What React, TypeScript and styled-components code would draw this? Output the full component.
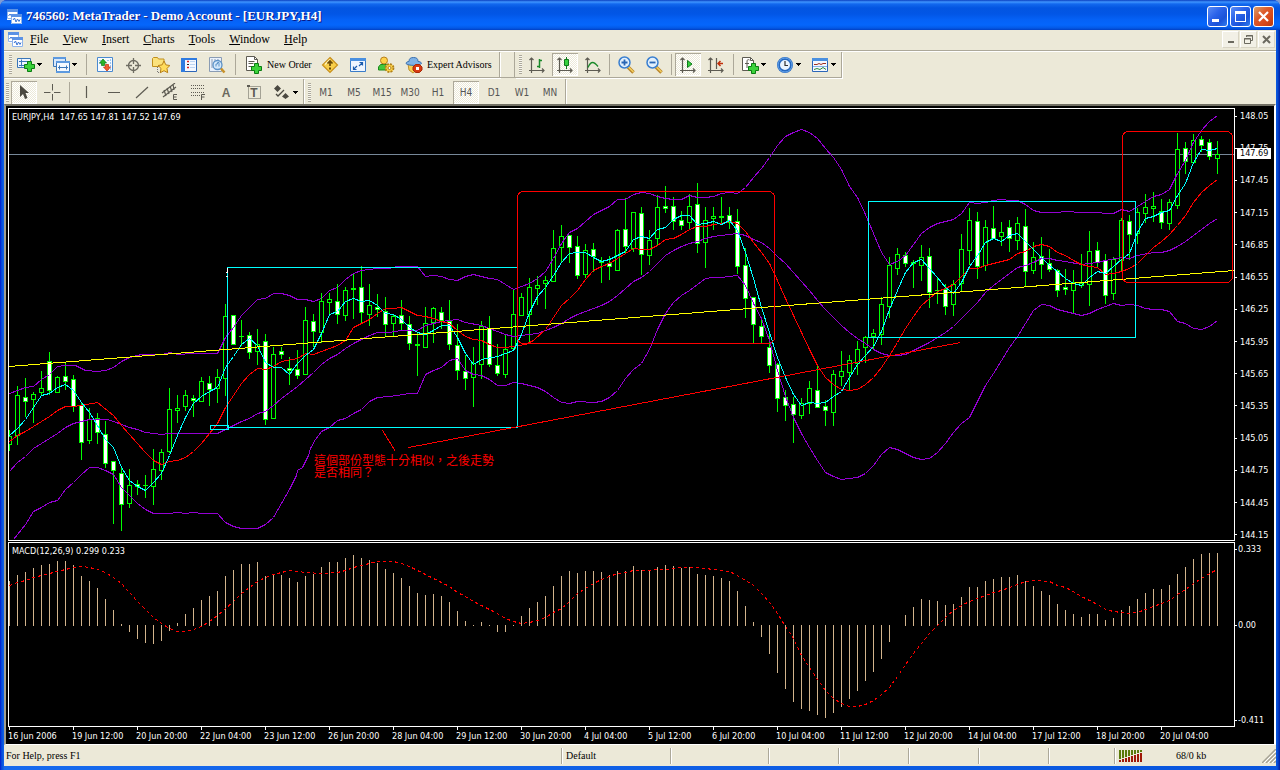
import React from "react";
import styled, { createGlobalStyle, css } from "styled-components";

const uiSerif = '"Liberation Serif", "Noto Sans CJK TC", serif';
const uiSans = '"DejaVu Sans Condensed", "DejaVu Sans", sans-serif';

const face = "#ece9d8";
const shade = "#aca899";

const GlobalStyle = createGlobalStyle`
  * { box-sizing: border-box; }
  body { margin: 0; background: #7f9cd4; font-family: ${uiSerif}; font-size: 12px; color: #000; }
  button { font: inherit; color: inherit; border: 0; background: none; padding: 0; margin: 0; }
  svg { display: block; flex: none; }
`;

/* ---------- frame ---------- */

const Frame = styled.div`
  display: flex;
  flex-direction: column;
  min-height: 100vh;
  border-radius: 7px 7px 0 0;
  overflow: hidden;
  background: #0831d9;
`;

const TitleBar = styled.header`
  display: flex;
  align-items: center;
  height: 30px;
  padding: 2px 6px 0 7px;
  background: linear-gradient(#0a3fc0 0, #3f95ff 2px, #1268ee 4px, #0355e1 8px, #0256e6 14px, #0562f7 20px, #0566fc 25px, #0459e6 28px, #0140c4 30px);
`;

const Title = styled.h1`
  flex: 1;
  margin: 0;
  padding-left: 4px;
  font-size: 13px;
  line-height: 16px;
  font-weight: bold;
  color: #fff;
  text-shadow: 1px 1px #0a1883;
`;

const CaptionButtons = styled.div`
  display: flex;
  gap: 2px;
`;

const CaptionButton = styled.button<{ $close?: boolean }>`
  display: flex;
  align-items: center;
  justify-content: center;
  width: 21px;
  height: 21px;
  border: 1px solid #fff;
  border-radius: 3px;
  background: ${(p) =>
    p.$close
      ? "linear-gradient(135deg, #d9a06a 0, #dd5a2a 40%, #d8481a 70%, #b93a10 100%)"
      : "linear-gradient(135deg, #5c8df5 0, #2b63ea 40%, #1a52d8 70%, #2f7cf0 100%)"};
`;

const Body = styled.div`
  display: flex;
  flex-direction: column;
  flex: 1;
  padding: 0 4px 4px;
  background: linear-gradient(90deg, #0019cf 0, #0855dd 2px, #0855dd 3px, #166aee 4px, #0855dd calc(100% - 3px), #001ea0 100%);
`;

const MenuBar = styled.nav`
  display: flex;
  align-items: center;
  height: 22px;
  padding: 0 1px 3px 4px;
  background: ${face};
  border-bottom: 1px solid #fff;
  box-shadow: inset 0 -1px ${shade};
`;

const MenuItems = styled.div`
  display: flex;
  flex: 1;
`;

const MenuItem = styled.button`
  padding: 0 7px;
  font-size: 12px;
  line-height: 18px;
`;

const ChildButtons = styled.div`
  display: flex;
  gap: 1px;
`;

const ChildButton = styled.button`
  display: flex;
  align-items: center;
  justify-content: center;
  width: 17px;
  height: 17px;
  background: #f2f0e6;
  border: 1px solid #fff;
  border-right-color: #d8d4c4;
  border-bottom-color: #d8d4c4;
`;

/* ---------- toolbars ---------- */

const ToolRow = styled.div<{ $height: number }>`
  display: flex;
  height: ${(p) => p.$height}px;
  background: ${face};
`;

const ToolBar = styled.div<{ $pad?: number; $last?: boolean }>`
  display: flex;
  align-items: center;
  padding-top: ${(p) => (p.$last ? 1 : 0)}px;
  padding-right: ${(p) => p.$pad ?? 0}px;
  border-right: 1px solid ${shade};
  border-bottom: ${(p) => (p.$last ? "0" : "1px solid " + shade)};
  box-shadow: 1px 1px #fff;
  margin-bottom: ${(p) => (p.$last ? 0 : 1)}px;
`;

const BarGap = styled.div`
  width: 15px;
  border-right: 1px solid ${shade};
  border-bottom: 1px solid ${shade};
  margin-bottom: 1px;
`;

const Grip = styled.div<{ $before?: number; $after?: number }>`
  width: 3px;
  height: 19px;
  margin: 0 ${(p) => p.$after ?? 1}px 0 ${(p) => p.$before ?? 4}px;
  background: repeating-linear-gradient(${shade} 0 1px, #f8f7f0 1px 2px);
`;

const Divider = styled.div<{ $width?: number }>`
  display: flex;
  justify-content: center;
  width: ${(p) => p.$width ?? 6}px;
  height: 21px;
  &::before {
    content: "";
    width: 1px;
    background: ${shade};
  }
`;

const pressedLook = css`
  background: repeating-conic-gradient(#fff 0 25%, #ece9d8 0 50%) 0 0 / 2px 2px;
  box-shadow: inset 1px 1px ${shade}, inset -1px -1px #fff;
`;

const ToolButton = styled.button<{ $pressed?: boolean }>`
  display: flex;
  align-items: center;
  justify-content: center;
  width: 26px;
  height: 23px;
  margin: 0 1px;
  ${(p) => p.$pressed && pressedLook}
`;

const DropButton = styled.button`
  display: flex;
  align-items: center;
  width: 35px;
  height: 23px;
  padding-left: 5px;
  gap: 2px;
`;

const TextButton = styled.button<{ $width: number }>`
  display: flex;
  align-items: center;
  width: ${(p) => p.$width}px;
  height: 23px;
  padding-left: 5px;
  gap: 4px;
  font-size: 10px;
  white-space: nowrap;
`;

const PeriodButton = styled(ToolButton)`
  font-family: ${uiSans};
  font-size: 10px;
  color: #555;
`;

/* ---------- chart ---------- */

const ChartWindow = styled.main`
  display: flex;
  flex-direction: column;
  flex: 1;
  gap: 1px;
  padding: 2px 0 0 2px;
  background: #000;
  border: solid;
  border-width: 2px 2px 1px 2px;
  border-color: #716f64 #fff #fff #a09d8e;
  color: #fff;
  font-family: ${uiSans};
  font-size: 9px;
  line-height: 12px;
`;

const PaneRow = styled.section`
  display: flex;
`;

const Pane = styled.div`
  position: relative;
  display: flex;
  justify-content: flex-end;
  flex: 1;
  min-width: 0;
  overflow: hidden;
  border: 1px solid #fff;
`;

const PaneTitle = styled.h2`
  position: absolute;
  top: 2px;
  left: 3px;
  margin: 0;
  font-size: 9px;
  font-weight: normal;
  line-height: 12px;
  white-space: pre;
`;

const PriceAxis = styled.div`
  position: relative;
  display: flex;
  flex-direction: column;
  justify-content: space-between;
  width: 39px;
  padding-top: 2px;
`;

const MacdAxis = styled.div`
  display: grid;
  grid-template-rows: 76px 95px 12px;
  align-items: start;
  width: 39px;
  padding-top: 1px;
`;

const AxisLabel = styled.div<{ $gap?: number }>`
  display: flex;
  align-items: center;
  gap: ${(p) => p.$gap ?? 3}px;
  height: 12px;
  &::before {
    content: "";
    width: 2px;
    height: 1px;
    background: #fff;
  }
`;

const PriceTag = styled.output`
  position: absolute;
  top: 40px;
  left: 2px;
  width: 34px;
  height: 11px;
  padding-left: 3px;
  background: #fff;
  color: #000;
  line-height: 11px;
`;

const TimeAxis = styled.ol`
  display: flex;
  justify-content: flex-end;
  overflow: hidden;
  height: 17px;
  margin: -1px 50px 0 0;
  padding: 0;
  list-style: none;
`;

const TimeLabel = styled.li`
  flex: none;
  width: 64px;
  white-space: nowrap;
  &::before {
    content: "";
    display: block;
    width: 1px;
    height: 3px;
    margin-left: 1px;
    background: #fff;
  }
`;

/* ---------- status bar ---------- */

const StatusBar = styled.footer`
  display: flex;
  align-items: center;
  height: 21px;
  background: ${face};
  font-size: 10px;
`;

const StatusCell = styled.div<{ $width?: number }>`
  display: flex;
  align-items: center;
  flex: ${(p) => (p.$width ? "none" : "1")};
  width: ${(p) => (p.$width ? p.$width + "px" : "auto")};
  height: 16px;
  padding-left: ${(p) => (p.$width ? 4 : 2)}px;
  border-left: ${(p) => (p.$width ? "1px solid " + shade : "0")};
  box-shadow: ${(p) => (p.$width ? "inset 1px 0 #fff" : "none")};
`;

const Traffic = styled.span`
  flex: 1;
  padding-left: 33px;
`;

/* ---------- icons ---------- */

const Icon = ({ children, size = 18 }: { children: React.ReactNode; size?: number }) => (
  <svg width={size} height={size} viewBox={`0 0 ${size} ${size}`} fill="none" aria-hidden="true">
    {children}
  </svg>
);

const Arrow = () => (
  <svg width="5" height="3" viewBox="0 0 5 3" aria-hidden="true" shapeRendering="crispEdges">
    <path d="M0 0h5v1H0zM1 1h3v1H1zM2 2h1v1H2z" fill="#000" />
  </svg>
);

const AppIcon = () => (
  <Icon size={15}>
    <path d="M0 0h11v5h4v10H4v-4H0z" fill="#f4f8ff" />
    <path d="M.5.5h10v9H.5z" fill="#fff" stroke="#8fb4ea" />
    <path d="M0 0h11v3H0z" fill="#5b92e5" />
    <path d="M1.500 7l1.500-2 1.500 2" stroke="#3974d4" />
    <path d="M4.500 5.500h10v9h-10z" fill="#fff" stroke="#8fb4ea" />
    <path d="M4 5h11v3H4z" fill="#5b92e5" />
    <path d="M6 11l1.500-2 1.500 4 1.500-3 1.500 2.500 1-2" stroke="#3974d4" />
  </Icon>
);

const PlusMark = ({ x, y }: { x: number; y: number }) => (
  <path
    transform={`translate(${x} ${y})`}
    d="M3.500.5h4v3h3v4h-3v3h-4v-3h-3v-4h3z"
    fill="#3bd23b"
    stroke="#0a7d12"
  />
);

const NewChartIcon = () => (
  <Icon>
    <path d="M.5 2.500h13v9H.5z" fill="#eef5ff" stroke="#3a76b8" />
    <path d="M2 5.500h9M2 9.500h5M4.500 3.500v7" stroke="#3a76b8" />
    <PlusMark x={7} y={5} />
  </Icon>
);

const ProfilesIcon = () => (
  <Icon>
    <path d="M1.500 1.500h12v9h-12z" fill="#d9e8fa" stroke="#3a76b8" />
    <path d="M1 1h13v2H1z" fill="#5d9ae0" />
    <path d="M4.500 5.500h13v11h-13z" fill="#f4f9ff" stroke="#3a76b8" />
    <path d="M4 5h14v2H4zM4 15h14v2H4z" fill="#5d9ae0" />
    <path d="M6 11.500h10M7.500 9.500v4M14.500 9.500v4" stroke="#3a76b8" />
  </Icon>
);

const MarketIcon = () => (
  <Icon>
    <path d="M1.500 1.500h15v14h-15z" fill="#f6faff" stroke="#4a8ad0" />
    <path d="M14.500 3v11M3 4.500h3M3 7.500h2M11 4.500h2M11 13.500h2" stroke="#9cc4ee" strokeDasharray="2 1" />
    <path d="M7 3l3.500 4H8.500v2.500h-3V7h-2z" fill="#28b428" stroke="#0c7a14" strokeWidth=".7" />
    <path d="M11 15l-3.500-4h2V8.500h3V11h2z" fill="#f06030" stroke="#c02a0a" strokeWidth=".7" />
  </Icon>
);

const CrosshairIcon = () => (
  <Icon>
    <circle cx="9.500" cy="9.500" r="5" stroke="#6e6c62" strokeWidth="1.300" />
    <path d="M9.500 2v6M9.500 11v6M2 9.500h6M11 9.500h6" stroke="#6e6c62" strokeWidth="1.300" />
  </Icon>
);

const NavigatorIcon = () => (
  <Icon>
    <path d="M.5 10.500v-8l1-1h4l1 1.500h5.500v7.500z" fill="#fbe27c" stroke="#c08f1c" />
    <path d="M5.500 11v6M6 16.500h3" stroke="#777" strokeDasharray="1 1" />
    <path
      d="M12 5l1.900 3.900 4 .6-2.900 2.900.7 4.300-3.700-2-3.700 2 .7-4.300-2.900-2.900 4-.6z"
      fill="#ffdc5c"
      stroke="#b8801a"
    />
  </Icon>
);

const DataWindowIcon = () => (
  <Icon>
    <path d="M1.500 2.500h15v13h-15z" fill="#f4f8ff" stroke="#2c66b8" />
    <path d="M1 2h4v14H1zM1 2h16v2H1z" fill="#2f7be0" />
    <path d="M7 5.500h2M7 11.500h2" stroke="#e02020" strokeWidth="1.500" />
    <path d="M7 8.500h2" stroke="#222" />
    <path d="M10 5.500h5M10 8.500h5M10 11.500h5" stroke="#bcd4f2" />
  </Icon>
);

const TesterIcon = () => (
  <Icon>
    <path d="M1.500 1.500h12v14h-12z" fill="#eaf2fc" stroke="#8a9cb4" />
    <path d="M4 3v9M7 3v3M10 3v3" stroke="#8a9cb4" />
    <circle cx="9.500" cy="9" r="4.500" fill="#d4e8fa" stroke="#5b92c8" strokeWidth="1.300" />
    <path d="M8 10.500V8h1.500V6.500h1.500v4" stroke="#5b92c8" />
    <path d="M13 12.500l3.500 4" stroke="#c8922c" strokeWidth="2.500" />
  </Icon>
);

const NewOrderIcon = () => (
  <Icon>
    <path d="M1.500.5h8l3 3v11h-11z" fill="#fff" stroke="#5d5b52" />
    <path d="M9.500.5v3h3M3.500 5.500h6M3.500 7.500h5M3.500 10.500h4" stroke="#5d5b52" />
    <PlusMark x={6} y={7} />
  </Icon>
);

const DiamondIcon = () => (
  <Icon>
    <path d="M9 1.500L16.500 9 9 16.500 1.500 9z" fill="#f8cf4a" stroke="#c8901c" strokeWidth="1.200" />
    <path d="M9 3.500L4 8.500" stroke="#fff3b8" strokeWidth="1.500" />
    <path d="M9 5v5M6.500 7.500L9 5l2.500 2.500" stroke="#6a4a08" strokeWidth="1.700" />
    <path d="M9 11.500v2" stroke="#6a4a08" strokeWidth="2" />
  </Icon>
);

const FullScreenIcon = () => (
  <Icon>
    <path d="M1.500 2.500h15v13h-15z" fill="#eef5ff" stroke="#3a7cc8" />
    <path d="M1 2h16v3H1z" fill="#4a90e0" />
    <path d="M10 10l3.500-3.500M10.500 6.500h3v3M8 10l-3.500 3.500M7.500 13.500h-3v-3" stroke="#1c5cae" strokeWidth="1.200" />
  </Icon>
);

const OptionsIcon = () => (
  <Icon>
    <path d="M1.500 14v-3l2-2.500h6l2 2.500v3z" fill="#46c83c" stroke="#1c8a1c" />
    <circle cx="7" cy="4.500" r="3.500" fill="#ffd24a" stroke="#b8801a" />
    <circle cx="12.500" cy="12" r="4" fill="#ffd54a" stroke="#b0801a" strokeWidth="1.800" strokeDasharray="2 1.140" />
    <circle cx="12.500" cy="12" r="1.500" fill="#fff" stroke="#b0801a" />
  </Icon>
);

const ExpertIcon = () => (
  <Icon>
    <path d="M3 8h10l-1 6-4 3-4-3z" fill="#f5cf55" stroke="#c0902c" />
    <path d="M1 7.500c0-1.500 2-2 3-2 0-3 1.500-4 4.500-4s4.500 1 4.500 4c1 0 3.500.5 3.500 2-2 2.500-13.500 2.500-15.500 0z" fill="#7fb2e6" stroke="#3a6fae" />
    <path d="M10.500 8.500h4l2.500 2.500v3l-2.500 2.500h-4L8 14v-3z" fill="#d83a12" stroke="#a82808" />
    <path d="M11 11h3v3h-3z" fill="#fff" />
  </Icon>
);

const ChartAxes = () => (
  <path d="M3.500 2v15M1 14.500h15M1.500 4l2-2 2 2M14 12.500l2 2-2 2" stroke="#5d5b52" strokeWidth="1.200" />
);

const BarChartIcon = () => (
  <Icon>
    <ChartAxes />
    <path d="M11.500 3v9M9 10.500h2.500M11.500 4.500H14" stroke="#1a8a2a" strokeWidth="1.500" />
  </Icon>
);

const CandleIcon = () => (
  <Icon>
    <ChartAxes />
    <path d="M10.500 1v12" stroke="#0e7a1a" />
    <path d="M8.500 3.500h4v6h-4z" fill="#35d03c" stroke="#0e7a1a" />
  </Icon>
);

const LineChartIcon = () => (
  <Icon>
    <ChartAxes />
    <path d="M4 11.500c3-7 6-6 10-1" stroke="#1a8a2a" strokeWidth="1.300" />
  </Icon>
);

const ZoomIcon = ({ plus }: { plus?: boolean }) => (
  <Icon>
    <path d="M11 11l5.500 5.500" stroke="#b8842a" strokeWidth="3.500" />
    <path d="M11.500 11l5 5" stroke="#f5d060" strokeWidth="1.500" />
    <circle cx="7.500" cy="6.500" r="5.500" fill="#e2f0fd" stroke="#3a7fd0" strokeWidth="1.500" />
    <path d={plus ? "M4.500 6.500h6M7.500 3.500v6" : "M4.500 6.500h6"} stroke="#2a66b4" strokeWidth="1.800" />
  </Icon>
);

const AutoScrollIcon = () => (
  <Icon>
    <ChartAxes />
    <path d="M8.500 4.500l4.500 3.500-4.500 3.500z" fill="#35d03c" stroke="#0e7a1a" />
  </Icon>
);

const ShiftIcon = () => (
  <Icon>
    <ChartAxes />
    <path d="M9.500 2v11" stroke="#5d5b52" strokeWidth="1.200" />
    <path d="M11 7.500h5M13.500 5L11 7.500l2.500 2.500" stroke="#c0300c" strokeWidth="1.500" />
  </Icon>
);

const IndicatorsIcon = () => (
  <Icon>
    <path d="M1.500 1.500h8l3 3v10h-11z" fill="#fff" stroke="#5d5b52" />
    <path d="M9.500 1.500v3h3M8.500 4c-2-1-2.500 0-2.500 2v6M4 7.500h4" stroke="#5d5b52" />
    <PlusMark x={7} y={7} />
  </Icon>
);

const ClockIcon = () => (
  <Icon>
    <circle cx="9" cy="9" r="6.500" fill="#eaf4ff" stroke="#2568c0" strokeWidth="3" />
    <circle cx="9" cy="9" r="7" stroke="#6aa8ee" strokeWidth="1" />
    <path d="M9 5v4.500h3" stroke="#333" strokeWidth="1.200" />
  </Icon>
);

const TemplateIcon = () => (
  <Icon>
    <path d="M1.500 2.500h15v13h-15z" fill="#f4f8ff" stroke="#2c66b8" />
    <path d="M1 2h16v3H1z" fill="#4a90e0" />
    <path d="M3 8.500h3l2-1 2 1 2-1h3" stroke="#a03020" />
    <path d="M2 10.500h14" stroke="#8ab4e6" />
    <path d="M3 13.500l3-1 3 1 3-2 3 2" stroke="#2a8a3a" />
  </Icon>
);

const CursorIcon = () => (
  <Icon>
    <path d="M5 2v12l3-3 2 5 2.500-1-2-5H14z" fill="#4a4840" />
  </Icon>
);

const CrossIcon = () => (
  <Icon>
    <path d="M9.500 1v6.500M9.500 11v6.500M1 9.500h6.500M11 9.500h6.500" stroke="#5d5b52" />
  </Icon>
);

const LineIcon = ({ d }: { d: string }) => (
  <Icon>
    <path d={d} stroke="#5d5b52" strokeWidth="1.200" />
  </Icon>
);

const ChannelIcon = () => (
  <Icon>
    <path d="M1 10L14 0M2 14L15 4M3 7l2 6M6 5l2 6M9 3l2 6M12 1l1 6" stroke="#5d5b52" strokeWidth="1.200" />
    <path d="M16 11.500h-3.500v5H16M12.500 14h3" stroke="#5d5b52" />
  </Icon>
);

const FiboIcon = () => (
  <Icon>
    <path d="M2 2.500h14M2 5.500h14M2 9.500h14M2 12.500h9" stroke="#5d5b52" strokeDasharray="1 1" />
    <path d="M12.500 17v-5.500H16M12.500 14h3" stroke="#5d5b52" />
  </Icon>
);

const LetterIcon = () => (
  <Icon>
    <text x="9" y="14" textAnchor="middle" fontFamily="Liberation Sans, sans-serif" fontSize="12" fontWeight="bold" fill="#6b695f">
      A
    </text>
  </Icon>
);

const LabelIcon = () => (
  <Icon>
    <path d="M3.500 3.500h12v12h-12z" stroke="#5d5b52" strokeDasharray="1 1" />
    <path d="M2 2h3v2H2z" fill="#5d5b52" />
    <text x="9" y="14" textAnchor="middle" fontFamily="Liberation Sans, sans-serif" fontSize="12" fontWeight="bold" fill="#5d5b52">
      T
    </text>
  </Icon>
);

const MarksIcon = () => (
  <Icon>
    <path d="M4.500 2L8 5.500 4.500 9 1 5.500zM12.500 10l3.500 3.500-3.500 2.500-3.500-2.500z" fill="#4a4840" />
    <path d="M3 11l2 2 6-6" stroke="#4a4840" strokeWidth="1.300" />
  </Icon>
);

/* ---------- chart data ---------- */

const FIRST_X = 9;
const STEP = 8;

// Each candle: high, body top, body bottom, low, falling (1) or rising (0).
const candles: number[][] = [
  [430,436,444,450,0],[386,395,435,444,0],[378,397,401,416,1],[392,394,399,422,0],[371,388,392,394,0],
  [352,361,390,394,1],[376,377,392,392,0],[363,376,381,389,1],[375,379,406,411,1],[403,405,442,459,1],
  [408,419,440,443,0],[413,418,432,443,1],[421,434,463,467,1],[461,461,470,523,1],[468,473,504,530,1],
  [469,485,503,507,0],[480,484,486,494,1],[475,485,485,497,0],[449,469,486,504,0],[449,452,470,479,0],
  [388,409,451,452,0],[395,408,410,422,0],[390,395,406,410,0],[395,398,400,416,1],[377,381,401,401,0],
  [376,383,389,405,1],[369,377,388,402,0],[304,316,378,395,0],[315,315,344,344,1],[320,336,336,345,0],
  [332,335,352,358,1],[329,344,351,364,0],[334,341,419,424,1],[347,354,418,418,0],[347,351,354,358,1],
  [357,368,370,384,1],[350,369,375,378,1],[307,320,374,374,0],[314,321,331,346,1],[293,301,332,342,0],
  [293,299,302,315,0],[284,301,314,323,1],[287,290,315,320,0],[274,288,289,318,0],[266,287,312,322,1],
  [284,305,314,325,0],[294,307,309,316,1],[297,311,324,336,1],[314,316,323,336,0],[300,315,323,329,1],
  [316,324,343,349,1],[332,344,345,375,0],[307,323,347,347,0],[307,308,322,342,0],[307,312,320,328,1],
  [300,321,344,349,1],[324,345,370,379,1],[355,371,378,389,1],[347,363,377,406,0],[321,326,364,378,0],
  [316,328,364,366,1],[344,365,373,375,1],[334,349,374,377,0],[290,314,348,350,0],[293,297,315,315,0],
  [278,287,314,342,0],[276,285,288,304,0],[276,280,283,308,0],[230,248,281,281,0],[225,236,247,261,0],
  [235,235,247,262,1],[236,246,275,278,1],[244,250,274,277,0],[243,249,256,271,1],[257,261,262,282,0],
  [256,263,266,279,1],[229,230,270,270,0],[198,229,246,252,1],[212,212,248,251,0],[207,213,254,274,1],
  [230,240,255,264,0],[195,207,238,244,0],[186,206,208,212,1],[197,206,221,229,1],[211,220,225,229,1],
  [194,206,222,228,0],[183,204,243,252,1],[207,220,242,267,0],[207,216,218,229,0],[197,216,217,222,0],
  [207,215,222,228,1],[209,221,266,273,1],[248,265,298,317,1],[297,297,324,342,1],[317,326,336,342,1],
  [332,347,365,372,1],[363,364,398,411,1],[390,397,405,420,1],[397,404,414,442,1],[398,403,415,418,0],
  [381,388,403,413,0],[365,390,407,407,1],[400,406,410,425,1],[370,374,412,425,0],[351,371,376,385,0],
  [355,360,372,389,0],[341,349,363,374,0],[336,337,347,362,0],[329,333,336,349,0],[297,304,334,344,0],
  [257,265,306,317,0],[248,254,268,274,0],[252,255,263,266,1],[260,262,263,287,0],[245,257,265,280,0],
  [248,256,292,307,1],[277,290,290,303,0],[284,289,306,314,1],[280,284,304,315,0],[234,249,283,291,0],
  [208,220,250,264,0],[212,221,266,278,1],[220,227,265,270,0],[206,228,238,238,1],[222,232,236,245,0],
  [220,227,238,251,1],[217,223,240,249,0],[209,226,271,286,1],[242,257,270,273,0],[237,256,264,278,1],
  [249,263,269,271,1],[269,270,290,296,1],[269,287,289,294,1],[270,282,290,312,0],[254,283,285,287,0],
  [231,251,284,305,0],[242,250,262,267,1],[254,260,295,303,1],[257,259,293,299,0],[218,220,260,270,0],
  [215,221,234,259,1],[208,212,233,243,0],[194,207,213,222,0],[192,206,208,221,0],[199,211,222,228,1],
  [199,202,223,229,0],[133,149,205,208,0],[142,148,161,173,1],[134,140,162,162,0],[136,139,145,151,1],
  [139,142,156,159,1],[141,154,158,173,0],
];

const bandUpper =
  "9,393 17,390 25,387 33,386 41,379 49,374 57,366 65,365 75,365 85,370 97,371 105,370 113,367 121,361 129,357 141,354 161,354 170,352 177,354 193,353 217,353 225,337 233,327 241,315 249,307 257,299 265,298 273,293 281,293 289,295 297,299 305,299 313,301 321,298 329,290 337,287 345,279 353,273 361,270 369,269 377,268 388,268 397,266 417,266 425,276 433,275 441,276 449,279 457,280 465,276 473,274 481,276 489,278 497,279 505,284 513,289 529,283 537,278 545,271 553,258 561,243 569,232 577,228 585,221 593,214 601,210 609,206 617,199 625,199 633,194 641,192 649,193 657,196 665,198 673,199 681,199 689,195 697,197 705,197 713,196 721,193 729,192 737,193 745,187 753,177 761,168 769,157 777,145 785,136 793,132 801,129 809,132 817,138 825,148 833,157 841,169 849,186 857,197 865,214 873,233 881,252 889,264 897,261 905,255 913,244 921,233 929,227 937,223 945,221 953,219 961,213 969,202 977,203 985,202 993,200 1001,199 1009,200 1017,200 1025,204 1033,210 1041,212 1057,212 1065,211 1081,212 1089,212 1113,213 1121,209 1129,211 1137,206 1145,201 1153,196 1161,194 1169,189 1177,173 1185,160 1193,142 1201,130 1209,121 1217,115";

const bandMiddle =
  "9,471 17,462 25,456 33,448 41,443 49,438 57,433 65,427 73,423 81,421 89,419 107,419 113,421 121,424 129,427 137,429 145,432 161,434 169,433 217,433 225,429 233,425 241,421 249,418 257,413 265,411 273,405 281,398 289,392 297,386 305,379 313,372 321,364 329,358 337,354 345,348 353,343 361,339 369,335 377,332 388,332 401,330 417,330 425,325 441,321 457,319 465,322 481,325 489,328 497,331 505,334 513,336 521,335 537,333 545,330 553,327 561,323 569,318 577,314 585,311 593,308 601,305 609,301 617,295 625,288 633,281 641,277 649,271 657,263 665,255 673,250 681,246 689,243 697,241 705,238 713,236 721,235 737,233 745,235 753,239 761,242 769,248 777,256 785,263 793,272 801,281 809,290 817,300 825,309 833,317 841,325 849,332 857,338 865,343 873,349 881,353 889,355 897,355 905,354 913,350 921,346 929,342 937,337 945,332 953,326 961,318 969,310 977,302 985,292 993,285 1001,279 1009,273 1017,267 1025,265 1033,262 1041,258 1049,258 1057,260 1065,261 1081,264 1097,262 1105,260 1121,257 1129,258 1137,255 1153,252 1161,252 1169,250 1177,246 1185,241 1193,235 1201,229 1209,223 1217,218";

const bandLower =
  "13,539 17,534 25,524 33,511 41,507 49,502 57,500 65,489 73,482 81,474 89,467 97,467 105,470 113,474 121,487 129,495 137,503 145,509 153,513 169,513 177,512 185,513 193,512 201,513 217,513 225,522 233,526 241,528 257,528 265,524 273,517 281,503 289,489 296,475 297,470 302,467 308,455 310,448 315,439 321,431 329,427 337,420 345,418 353,413 361,409 369,401 377,397 388,396 397,395 409,393 417,393 425,374 433,370 441,367 449,360 457,358 465,370 473,374 481,375 489,379 497,385 505,385 513,382 521,383 529,385 537,387 545,391 553,397 561,402 569,403 577,401 593,402 601,401 609,397 617,390 625,378 633,369 641,363 649,349 657,329 665,313 673,302 681,295 689,290 697,284 705,278 713,277 721,277 729,276 737,275 745,285 753,303 761,318 769,340 777,370 785,396 793,417 801,433 809,447 817,460 825,472 833,476 841,479 857,477 865,473 873,465 881,454 889,447 897,449 905,453 913,457 921,459 929,458 937,452 945,443 953,432 961,423 969,417 977,401 985,385 993,373 1001,360 1009,347 1017,336 1025,323 1033,310 1041,304 1049,305 1057,309 1065,311 1081,315 1089,313 1097,309 1105,306 1113,303 1121,305 1129,304 1137,305 1145,308 1153,309 1161,309 1169,311 1177,321 1185,323 1193,328 1201,329 1209,326 1217,320";

const fastAverage =
  "9,435 17,428 25,419 33,407 41,395 49,393 57,387 65,384 73,390 81,402 89,412 97,425 105,439 113,447 121,467 129,480 137,486 145,490 153,482 161,473 169,455 177,435 185,417 193,403 201,396 209,391 217,387 225,367 233,356 241,344 249,338 257,345 265,362 273,367 281,367 289,374 297,363 305,355 313,349 321,333 329,314 337,311 345,301 353,298 361,301 369,300 377,305 385,313 393,314 401,319 409,327 417,332 425,334 433,330 441,325 449,325 457,337 465,353 473,364 481,359 497,356 513,350 521,334 529,312 537,296 545,287 553,275 561,262 569,253 577,252 585,252 593,257 601,261 609,259 617,255 625,251 633,239 641,236 649,238 657,229 665,227 673,219 681,215 689,215 697,224 705,223 713,221 721,224 729,220 737,230 745,252 753,278 761,307 769,332 777,357 785,377 793,394 801,405 809,402 817,403 825,402 833,396 841,391 849,377 857,364 865,355 873,346 881,331 889,309 897,290 905,272 913,262 921,259 929,268 937,277 945,287 953,293 961,282 969,266 977,255 985,242 993,238 1001,241 1009,235 1017,233 1025,241 1033,249 1041,257 1049,265 1057,271 1065,278 1073,283 1081,285 1089,277 1097,271 1105,273 1113,266 1121,259 1129,253 1137,232 1145,218 1153,216 1161,212 1169,210 1177,195 1185,183 1193,162 1201,149 1209,150 1217,148";

const slowAverage =
  "9,441 17,435 25,431 33,426 41,421 49,416 57,410 65,406 73,406 81,405 97,402 113,415 121,425 129,434 137,443 145,452 153,460 161,464 169,461 177,460 185,457 193,451 201,443 209,433 217,423 225,407 233,395 241,383 249,374 257,368 265,369 273,366 281,361 297,358 305,353 313,354 337,345 345,340 353,327 361,323 369,319 377,313 385,308 393,308 401,307 409,311 417,315 425,316 433,318 441,321 449,323 457,330 465,336 473,339 481,340 489,344 497,347 505,347 513,346 525,344 533,340 545,329 553,317 561,305 569,298 577,290 585,279 593,270 601,266 609,263 617,258 625,253 633,248 641,249 649,249 657,245 665,239 673,238 681,234 689,229 697,226 705,226 713,224 721,223 729,221 737,223 745,231 753,242 761,252 769,263 777,280 785,298 793,315 801,332 809,349 817,365 825,377 833,384 841,389 849,390 857,389 865,384 873,377 881,367 889,355 897,342 905,328 913,316 921,305 929,298 937,291 945,288 953,284 961,276 969,268 977,268 985,265 1001,261 1009,259 1017,253 1025,251 1033,246 1041,244 1049,246 1057,252 1065,255 1073,260 1081,264 1089,266 1097,267 1105,274 1113,273 1121,271 1129,268 1137,263 1145,255 1153,247 1161,241 1169,234 1177,225 1185,215 1193,202 1201,192 1209,185 1217,179";

const ZERO_Y = 625;

// End of each histogram bar; the bars start at ZERO_Y.
const histogram = [
  581,575,572,568,565,564,561,561,565,576,581,588,599,610,624,631,638,642,643,640,630,623,614,608,600,596,591,576,570,564,
  564,562,576,574,575,578,582,576,574,567,562,562,558,555,558,560,563,569,573,578,586,593,595,594,596,602,611,621,625,622,
  625,631,631,625,616,608,602,596,586,576,571,573,571,571,572,575,571,571,566,570,571,567,565,566,568,567,574,575,576,578,
  581,591,606,622,636,653,672,688,701,708,710,714,717,712,706,698,690,680,671,658,641,625,615,607,599,600,601,605,604,597,
  587,587,581,579,577,577,575,581,586,591,595,604,610,614,617,614,614,620,618,610,606,599,593,589,589,585,574,567,559,554,
  553,553,
];

const signal =
  "9,585 17,582 25,580 33,577 41,575 49,573 57,571 65,569 73,567 81,566 89,567 97,569 105,572 113,577 121,583 129,592 137,601 145,609 153,617 161,623 169,628 177,631 185,631 193,629 201,626 209,621 217,615 225,608 233,601 241,593 249,587 257,581 265,577 273,574 281,572 289,570 305,572 321,573 337,572 345,570 353,567 361,565 369,563 377,561 393,561 401,563 409,566 417,570 425,574 433,578 441,582 449,586 457,592 465,596 473,601 481,605 489,609 497,613 505,618 513,621 521,623 529,622 537,620 545,617 553,612 561,608 569,601 577,593 585,588 593,583 601,579 609,576 617,573 625,572 633,570 649,570 657,569 665,569 673,568 681,567 697,567 713,569 729,571 737,575 745,580 753,585 761,593 769,602 777,613 785,626 793,638 801,655 809,667 817,679 825,690 833,698 841,703 849,706 857,706 865,704 873,700 881,694 889,687 897,676 905,664 913,653 921,643 929,633 937,625 945,617 953,610 961,605 969,601 977,598 993,592 1001,590 1009,587 1017,584 1025,581 1033,580 1049,581 1057,585 1065,587 1073,591 1081,596 1089,600 1097,604 1105,609 1113,611 1129,613 1137,612 1145,609 1153,606 1161,603 1169,600 1177,594 1185,589 1193,583 1201,578 1209,573 1217,569";

const prices = ["148.05","147.75","147.45","147.15","146.85","146.55","146.25","145.95","145.65","145.35","145.05","144.75","144.45","144.15"];

const times = [
  "16 Jun 2006","19 Jun 12:00","20 Jun 20:00","22 Jun 04:00","23 Jun 12:00","26 Jun 20:00","28 Jun 04:00",
  "29 Jun 12:00","30 Jun 20:00","4 Jul 04:00","5 Jul 12:00","6 Jul 20:00","10 Jul 04:00","11 Jul 12:00",
  "12 Jul 20:00","14 Jul 04:00","17 Jul 12:00","18 Jul 20:00","20 Jul 04:00",
];

const Candle = ({ x, data }: { x: number; data: number[] }) => {
  const [high, top, bottom, low, falling] = data;
  return (
    <g>
      <path d={`M${x} ${high - 0.5}V${low + 0.5}`} />
      {bottom - top < 2 ? (
        <path d={`M${x - 2.5} ${top}h5${bottom > top ? `M${x - 2.5} ${bottom}h5` : ""}`} />
      ) : (
        <rect x={x - 2} y={top} width="4" height={bottom - top} fill={falling ? "#fff" : "#000"} />
      )}
    </g>
  );
};

const PriceChart = () => (
  <svg width="1225" height="431" viewBox="9 109 1225 431" fill="none" role="img" aria-label="EURJPY H4 price chart">
    <g transform="translate(.5 .5)" shapeRendering="crispEdges">
      <path d="M8 154H1234" stroke="#778899" />
      <g stroke="#00ff00">
        {candles.map((c, i) => (
          <Candle key={i} x={FIRST_X + STEP * i} data={c} />
        ))}
      </g>
      <g stroke="#9400d3">
        <polyline points={bandUpper} />
        <polyline points={bandMiddle} />
        <polyline points={bandLower} />
      </g>
      <polyline points={slowAverage} stroke="#ff0000" />
      <polyline points={fastAverage} stroke="#00ffff" />
      <g stroke="#00ffff">
        <path d="M227 427V267H517V427z" />
        <path d="M210 425h18v4h-18z" />
        <path d="M868 201h267v136H868z" />
      </g>
      <path d="M227 267v4M225 272h2M225 276h2" stroke="#fff" />
      <path d="M8 366L1234 270" stroke="#ffff00" />
      <g stroke="#ff0000">
        <rect x="517" y="191" width="257" height="152" rx="6" />
        <rect x="1122" y="131" width="110" height="151" rx="6" />
        <path d="M408 447L960 342M382 430L395 451" />
      </g>
    </g>
    <g fill="#ff0000" fontSize="12" fontFamily='"Noto Sans CJK TC", sans-serif'>
      <text x="314" y="465">這個部份型態十分相似，之後走勢</text>
      <text x="314" y="477">是否相同？</text>
    </g>
  </svg>
);

const MacdChart = () => (
  <svg width="1225" height="183" viewBox="9 543 1225 183" fill="none" role="img" aria-label="MACD histogram">
    <g transform="translate(.5 .5)" shapeRendering="crispEdges">
      <g stroke="#d2b48c">
        {histogram.map((y, i) => {
          const x = FIRST_X + STEP * i;
          return i === 111 ? null : (
            <path key={i} d={`M${x} ${Math.min(y, ZERO_Y) - 0.5}V${Math.max(y, ZERO_Y) + 0.5}`} />
          );
        })}
      </g>
      <polyline points={signal} stroke="#ff0000" strokeDasharray="3 3" />
    </g>
  </svg>
);

/* ---------- page ---------- */

const menus = ["File", "View", "Insert", "Charts", "Tools", "Window", "Help"];
const periods = ["M1", "M5", "M15", "M30", "H1", "H4", "D1", "W1", "MN"];
const trafficBars = [2, 3, 4, 5, 6, 7, 8, 9];

const Drop = ({ label, children }: { label: string; children: React.ReactNode }) => (
  <DropButton aria-label={label}>
    {children}
    <Arrow />
  </DropButton>
);

const Tool = ({ label, pressed, children }: { label: string; pressed?: boolean; children: React.ReactNode }) => (
  <ToolButton aria-label={label} $pressed={pressed}>
    {children}
  </ToolButton>
);

export default function App() {
  return (
    <Frame>
      <GlobalStyle />
      <TitleBar>
        <AppIcon />
        <Title>746560: MetaTrader - Demo Account - [EURJPY,H4]</Title>
        <CaptionButtons>
          <CaptionButton aria-label="Minimize">
            <Icon size={13}><path d="M1 9h7v3H1z" fill="#fff" /></Icon>
          </CaptionButton>
          <CaptionButton aria-label="Maximize">
            <Icon size={13}><path d="M1 1h11v11H1zM2 4v7h9V4z" fill="#fff" fillRule="evenodd" /></Icon>
          </CaptionButton>
          <CaptionButton aria-label="Close" $close>
            <Icon size={13}><path d="M2 2l9 9M11 2l-9 9" stroke="#fff" strokeWidth="2.200" /></Icon>
          </CaptionButton>
        </CaptionButtons>
      </TitleBar>

      <Body>
        <MenuBar>
          <AppIcon />
          <MenuItems>
            {menus.map((m) => (
              <MenuItem key={m}><u>{m[0]}</u>{m.slice(1)}</MenuItem>
            ))}
          </MenuItems>
          <ChildButtons>
            <ChildButton aria-label="Minimize chart">
              <Icon size={11}><path d="M3 7h6v2H3z" fill="#6b695f" /></Icon>
            </ChildButton>
            <ChildButton aria-label="Restore chart">
              <Icon size={11}><path d="M3.500 3V1.500h6v5H8M3 2h7M1.500 4.500h6v5h-6zM1 5h7" stroke="#6b695f" /></Icon>
            </ChildButton>
            <ChildButton aria-label="Close chart">
              <Icon size={11}><path d="M2 2l7 7M9 2L2 9" stroke="#6b695f" strokeWidth="2" /></Icon>
            </ChildButton>
          </ChildButtons>
        </MenuBar>

        <ToolRow $height={27}>
          <ToolBar $pad={1}>
            <Grip $before={5} $after={0} />
            <Drop label="New chart"><NewChartIcon /></Drop>
            <Drop label="Profiles"><ProfilesIcon /></Drop>
            <Divider $width={9} />
            <Tool label="Market watch"><MarketIcon /></Tool>
            <Tool label="Crosshair"><CrosshairIcon /></Tool>
            <Tool label="Navigator"><NavigatorIcon /></Tool>
            <Tool label="Data window"><DataWindowIcon /></Tool>
            <Tool label="Strategy tester"><TesterIcon /></Tool>
            <Divider $width={9} />
            <TextButton $width={76}><NewOrderIcon />New Order</TextButton>
            <Tool label="Editor"><DiamondIcon /></Tool>
            <Tool label="Full screen"><FullScreenIcon /></Tool>
            <Tool label="Options"><OptionsIcon /></Tool>
            <TextButton $width={98}><ExpertIcon />Expert Advisors</TextButton>
          </ToolBar>
          <BarGap />
          <ToolBar>
            <Grip />
            <Tool label="Bar chart"><BarChartIcon /></Tool>
            <Tool label="Candlesticks" pressed><CandleIcon /></Tool>
            <Tool label="Line chart"><LineChartIcon /></Tool>
            <Divider $width={5} />
            <Tool label="Zoom in"><ZoomIcon plus /></Tool>
            <Tool label="Zoom out"><ZoomIcon /></Tool>
            <Divider />
            <Tool label="Auto scroll" pressed><AutoScrollIcon /></Tool>
            <Tool label="Chart shift"><ShiftIcon /></Tool>
            <Divider />
            <Drop label="Indicators"><IndicatorsIcon /></Drop>
            <Drop label="Periods"><ClockIcon /></Drop>
            <Drop label="Templates"><TemplateIcon /></Drop>
          </ToolBar>
        </ToolRow>

        <ToolRow $height={25}>
          <ToolBar $last>
            <Grip $before={2} />
            <Tool label="Cursor" pressed><CursorIcon /></Tool>
            <Tool label="Cross"><CrossIcon /></Tool>
            <Divider />
            <Tool label="Vertical line"><LineIcon d="M9.500 3v12" /></Tool>
            <Tool label="Horizontal line"><LineIcon d="M3 9.500h12" /></Tool>
            <Tool label="Trend line"><LineIcon d="M3 15L15 4" /></Tool>
            <Tool label="Channel"><ChannelIcon /></Tool>
            <Tool label="Fibonacci"><FiboIcon /></Tool>
            <Tool label="Text"><LetterIcon /></Tool>
            <Tool label="Text label"><LabelIcon /></Tool>
            <Drop label="Arrows"><MarksIcon /></Drop>
          </ToolBar>
          <ToolBar $pad={1} $last>
            <Grip />
            {periods.map((p) => (
              <PeriodButton key={p} $pressed={p === "H4"}>{p}</PeriodButton>
            ))}
          </ToolBar>
        </ToolRow>

        <ChartWindow>
          <PaneRow>
            <Pane>
              <PriceChart />
              <PaneTitle>EURJPY,H4  147.65 147.81 147.52 147.69</PaneTitle>
            </Pane>
            <PriceAxis>
              {prices.map((p) => (
                <AxisLabel key={p}>{p}</AxisLabel>
              ))}
              <PriceTag>147.69</PriceTag>
            </PriceAxis>
          </PaneRow>
          <PaneRow>
            <Pane>
              <MacdChart />
              <PaneTitle>MACD(12,26,9) 0.299 0.233</PaneTitle>
            </Pane>
            <MacdAxis>
              <AxisLabel $gap={1}>0.333</AxisLabel>
              <AxisLabel $gap={1}>0.00</AxisLabel>
              <AxisLabel $gap={1}>-0.411</AxisLabel>
            </MacdAxis>
          </PaneRow>
          <TimeAxis>
            {times.map((t) => (
              <TimeLabel key={t}>{t}</TimeLabel>
            ))}
          </TimeAxis>
        </ChartWindow>

        <StatusBar>
          <StatusCell>For Help, press F1</StatusCell>
          <StatusCell $width={109}>Default</StatusCell>
          <StatusCell $width={98} />
          <StatusCell $width={70} />
          <StatusCell $width={70} />
          <StatusCell $width={70} />
          <StatusCell $width={70} />
          <StatusCell $width={66} />
          <StatusCell $width={162}>
            <svg width="24" height="12" viewBox="0 0 24 12" aria-hidden="true" shapeRendering="crispEdges">
              {trafficBars.map((h, i) => (
                <g key={i}>
                  <rect x={i * 3} y="0" width="2" height={11 - h} fill="#5a7a0a" />
                  <rect x={i * 3} y={12 - h} width="2" height={h} fill="#a01808" />
                </g>
              ))}
            </svg>
            <Traffic>68/0 kb</Traffic>
            <svg width="14" height="14" viewBox="0 0 14 14" fill="none" aria-hidden="true">
              <path d="M0 14L14 0M4 14L14 4M8 14l6-6M12 14l2-2" stroke="#a5a294" strokeWidth="1.500" />
              <path d="M2 14L14 2M6 14l8-8M10 14l4-4" stroke="#fff" />
            </svg>
          </StatusCell>
        </StatusBar>
      </Body>
    </Frame>
  );
}
